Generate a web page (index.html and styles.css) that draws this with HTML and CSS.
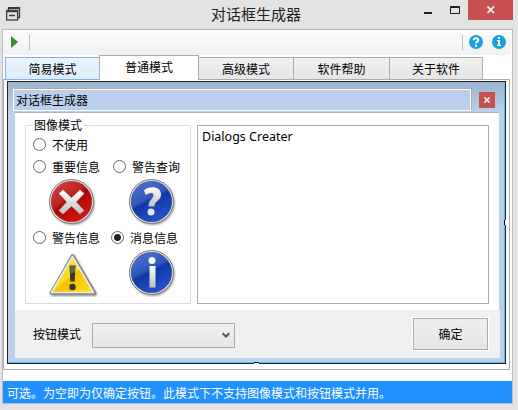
FILE: index.html
```html
<!DOCTYPE html>
<html lang="zh-CN">
<head>
<meta charset="utf-8">
<title>对话框生成器</title>
<link rel="stylesheet" href="styles.css">
</head>
<body>
<div class="window">
  <header class="titlebar">
    <svg class="app-icon" width="16" height="16" viewBox="0 0 16 16" fill="none" stroke="#3c3c3c" stroke-width="1.300"><path d="M2.500 3V.6h11v9.900h-2M2.500 1.500h11" /><rect x=".6" y="3.500" width="11" height="9.500"/><path d="M1 4.500h10.500M3 8.500h6"/></svg>
    <h1 class="title">对话框生成器</h1>
    <svg class="controls" width="46" height="20" viewBox="0 0 46 20"><path d="M2 12h8v2H2z" fill="#222"/><path d="M28 6h10v8H28zm1 2v5h8V8z" fill="#222" fill-rule="evenodd"/></svg>
    <div class="close"><svg width="10" height="8" viewBox="0 0 10 8"><path d="M1.500 .5l6.500 6.500M8 .5L1.500 7" stroke="#fff" stroke-width="1.700"/></svg></div>
  </header>
  <main class="client">
    <div class="toolbar">
      <svg width="7" height="12" viewBox="0 0 7 12"><path d="M0 0l7 6-7 6z" fill="#388a34"/></svg>
      <i class="sep"></i>
      <i class="sep sep-right"></i>
      <svg class="tool" width="14" height="14" viewBox="0 0 14 14"><circle cx="7" cy="7" r="7" fill="#1ba1e2"/><path d="M4.600 5.200C4.600 2.600 9.300 2.600 9.300 5.200 9.300 6.700 7 6.600 7 8.500" fill="none" stroke="#fff" stroke-width="1.900"/><path d="M6 9.700h2v2H6z" fill="#fff"/></svg>
      <svg class="tool" width="14" height="14" viewBox="0 0 14 14"><circle cx="7" cy="7" r="7" fill="#1ba1e2"/><path d="M6 2h2v2H6zM5 5h3v5h1v1H5v-1h1V6H5z" fill="#fff"/></svg>
    </div>
    <nav class="tabs">
      <div class="tab tab-hot">简易模式</div>
      <div class="tab tab-active">普通模式</div>
      <div class="tab tab-near">高级模式</div>
      <div class="tab">软件帮助</div>
      <div class="tab tab-last">关于软件</div>
    </nav>
    <div class="page">
      <section class="dialog">
        <div class="dialog-head">
          <div class="dialog-title">对话框生成器</div>
          <div class="dialog-close"><svg width="6" height="6" viewBox="0 0 6 6"><path d="M.5.5l5 5M5.500.5l-5 5" stroke="#fff" stroke-width="1.500"/></svg></div>
        </div>
        <div class="dialog-body">
          <div class="content">
            <fieldset class="group">
              <legend>图像模式</legend>
              <div class="row"><label class="option"><i class="radio"></i>不使用</label></div>
              <div class="row row-second"><label class="option"><i class="radio"></i>重要信息</label><label class="option"><i class="radio"></i>警告查询</label></div>
              <div class="icons">
                <svg width="48" height="48" viewBox="0 0 48 48">
                  <defs>
                    <linearGradient id="red" x1="0" y1="0" x2=".7" y2="1"><stop offset="0" stop-color="#d84740"/><stop offset=".45" stop-color="#bd2420"/><stop offset=".55" stop-color="#a90505"/><stop offset="1" stop-color="#dc1510"/></linearGradient>
                    <linearGradient id="blue" x1="0" y1="0" x2=".5" y2="1"><stop offset="0" stop-color="#5575d1"/><stop offset=".5" stop-color="#3157bc"/><stop offset=".58" stop-color="#1038a3"/><stop offset="1" stop-color="#244fc9"/></linearGradient>
                    <linearGradient id="silver" x1="0" y1="0" x2="0" y2="1"><stop offset="0" stop-color="#fff"/><stop offset="1" stop-color="#bfbfbf"/></linearGradient>
                    <linearGradient id="yellow" x1="0" y1="0" x2="1" y2="1"><stop offset="0" stop-color="#ffe958"/><stop offset=".5" stop-color="#f5dc16"/><stop offset=".52" stop-color="#f6be00"/><stop offset="1" stop-color="#ffe321"/></linearGradient>
                    <filter id="soft" x="-20%" y="-20%" width="140%" height="140%"><feGaussianBlur stdDeviation=".8"/></filter>
                  </defs>
                  <circle cx="24.500" cy="24.800" r="22" fill="#888" filter="url(#soft)"/><circle cx="23.500" cy="23.500" r="22" fill="#f3f3f3" stroke="#777"/><circle cx="23.500" cy="23.500" r="20.300" fill="url(#red)" stroke="#8e2222" stroke-width=".6"/>
                  <path d="M15 11.500l8.500 8 8.500-8 4.500 4-8 8.500 8 8.500-4.500 4-8.500-8-8.500 8-4.500-4 8-8.500-8-8.500z" fill="url(#silver)" stroke="#8b2020" stroke-width=".5"/>
                </svg>
                <svg width="48" height="48" viewBox="0 0 48 48"><circle cx="24.500" cy="24.800" r="22" fill="#888" filter="url(#soft)"/><circle cx="23.500" cy="23.500" r="22" fill="#f3f3f3" stroke="#777"/><circle cx="23.500" cy="23.500" r="20.300" fill="url(#blue)" stroke="#203a83" stroke-width=".6"/><path d="M16 12.500c5-5 17-4.500 17 4 0 6.500-6.500 6-6.500 12h-6c0-7 5-7.500 5-11.500 0-3-4-2.500-8 0z" fill="url(#silver)"/><circle cx="23" cy="34" r="3.500" fill="#e5e5e5"/></svg>
              </div>
              <div class="row row-third"><label class="option"><i class="radio"></i>警告信息</label><label class="option"><i class="radio checked"></i>消息信息</label></div>
              <div class="icons">
                <svg width="50" height="48" viewBox="0 0 50 48"><path d="M26 7l22 39H4z" fill="#888" stroke="#888" stroke-width="2" stroke-linejoin="round" filter="url(#soft)"/><path d="M24.500 6.500L3 44h44z" fill="#ddd" stroke="#858585" stroke-width="3" stroke-linejoin="round"/><path d="M24.500 7.500L3.500 43.500h42z" fill="url(#yellow)" stroke="#eee" stroke-width="1.500" stroke-linejoin="round"/><path d="M21.500 16.500h6l-.8 16h-4.400z" fill="#35352b"/><path d="M22 17h5v6l-4.500 2z" fill="#666355"/><circle cx="24.500" cy="38" r="3.200" fill="#35352b"/></svg>
                <svg width="48" height="48" viewBox="0 0 48 48"><circle cx="24.500" cy="24.800" r="22" fill="#888" filter="url(#soft)"/><circle cx="23.500" cy="23.500" r="22" fill="#f3f3f3" stroke="#777"/><circle cx="23.500" cy="23.500" r="20.300" fill="url(#blue)" stroke="#203a83" stroke-width=".6"/><circle cx="24" cy="11.500" r="3.500" fill="#fff"/><path d="M21.500 17h6v21.500h-6z" fill="url(#silver)"/></svg>
              </div>
            </fieldset>
            <div class="message">Dialogs Creater</div>
          </div>
          <footer class="footer">
            <span class="footer-label">按钮模式</span>
            <div class="select"><svg width="8" height="7" viewBox="0 0 8 7"><path d="M.7 1.200L4 4.600l3.300-3.400" fill="none" stroke="#555" stroke-width="2"/></svg></div>
            <div class="button">确定</div>
          </footer>
        </div>
        <i class="handle handle-right"></i>
        <i class="handle handle-bottom"></i>
      </section>
    </div>
    <div class="status">可选。为空即为仅确定按钮。此模式下不支持图像模式和按钮模式并用。</div>
  </main>
</div>
</body>
</html>
```
FILE: styles.css
```css
* { box-sizing: border-box; }
body { margin: 0; font: 12px/16px "Noto Sans CJK SC", sans-serif; color: #000; }
svg { display: block; flex: none; }
.window { width: 518px; height: 410px; background: #e3e3e3; overflow: hidden; }
.titlebar { height: 29px; display: flex; align-items: flex-start; }
.app-icon { margin: 7px 0 0 6px; }
.title { flex: 1; margin: 4px 0 0 189px; font-size: 15px; line-height: 20px; font-weight: 400; color: #222; }
.controls { margin-right: 0; }
.close { width: 45px; height: 20px; margin-right: 5px; background: #c75050; display: flex; align-items: center; justify-content: center; }
.client { width: 511px; height: 375px; margin-left: 2px; border: 1px solid #bbb; background: #fff; display: flex; flex-direction: column; }
.toolbar { height: 25px; width: 508px; background: linear-gradient(#fdfdfd, #f0f0f0); border-radius: 0 0 4px 4px; display: flex; align-items: center; padding: 0 5px 1px 8px; flex: none; }
.sep { width: 1px; height: 15px; background: #bbb; margin-left: 11px; }
.sep-right { margin-left: auto; margin-right: -3px; }
.tool { margin-left: 9px; }
.tabs { height: 24px; padding-left: 2px; display: flex; align-items: flex-start; flex: none; }
.tab { position: relative; z-index: 1; width: 96px; height: 23px; margin-top: 2px; border: 1px solid #acacac; border-left: 0; background: linear-gradient(#f0f0f0, #e5e5e5); text-align: center; line-height: 22px; }
.tab-hot { width: 94px; border: 1px solid #7eb4ea; border-right: 0; background: linear-gradient(#ecf4fc, #dcecfc); }
.tab-active { width: 100px; height: 25px; margin-top: 0; border: 1px solid #acacac; border-bottom: 0; background: #fff; line-height: 22px; }
.tab-near { width: 95px; }
.tab-last { width: 93px; }
.page { height: 291px; width: 507px; border: 1px solid #acacac; padding: 1px 0 0 3px; flex: none; }
.dialog { position: relative; width: 499px; height: 283px; border: 1px solid #222; box-shadow: inset -1px -1px #45c8f4; background: linear-gradient(#99b4d1, #b9d1ea 30px); padding: 6px 6px 4px 5px; }
.dialog-head { display: flex; height: 24px; }
.dialog-title { width: 459px; height: 23px; border: 1px solid #fff; border-top-color: #aaa; border-right-color: #aaa; box-shadow: inset -1px 1px #fff; background: #b9cfeb; padding-left: 2px; line-height: 21px; }
.dialog-close { width: 16px; height: 16px; margin: 4px 0 0 7px; background: #c75050; display: flex; align-items: center; justify-content: center; }
.dialog-body { width: 485px; margin-left: 2px; }
.content { width: 484px; height: 198px; background: #fff; border-top: 1px solid #aeb2c0; display: flex; padding-left: 10px; }
.group { width: 166px; height: 186px; margin: 5px 6px 0 0; padding: 0 7px; border: 1px solid #dcdcdc; flex: none; }
legend { height: 15px; margin-left: 0; padding: 0 2px 0 1px; line-height: 14px; white-space: nowrap; }
.row { display: flex; height: 15px; margin-top: 4px; }
.row-second { margin-top: 7px; gap: 13px; }
.row-third { margin-top: 4px; gap: 11px; }
.option { display: flex; align-items: center; line-height: 15px; white-space: nowrap; }
.radio { width: 13px; height: 13px; border: 1px solid #666; border-radius: 50%; margin-right: 6px; }
.checked { background: radial-gradient(circle, #222 3px, #fff 4px); }
.icons { display: flex; justify-content: space-between; width: 128px; height: 48px; margin: 4px 0 0 15px; }
.message { width: 292px; height: 179px; margin-top: 12px; border: 1px solid #acacac; padding: 2px 4px; font: 12.500px/17px "Noto Sans", sans-serif; }
.footer { width: 485px; height: 48px; background: #f0f0f0; display: flex; align-items: center; padding: 0 12px 0 18px; }
.footer-label { width: 59px; }
.select { width: 143px; height: 25px; margin-top: 3px; border: 1px solid #acacac; background: linear-gradient(#f0f0f0, #e5e5e5); display: flex; align-items: center; justify-content: flex-end; padding-right: 4px; }
.button { width: 75px; height: 32px; margin-left: auto; border: 1px solid #acacac; box-shadow: 0 0 0 1px #fff; background: linear-gradient(#f0f0f0, #e5e5e5); text-align: center; line-height: 29px; }
.handle { position: absolute; background: #fff; }
.handle-right { width: 3px; height: 5px; right: -2px; top: 138px; border-left: 1px solid #000; }
.handle-bottom { width: 5px; height: 3px; left: 246px; bottom: -2px; border-top: 1px solid #000; }
.status { height: 22px; margin-top: 11px; padding-left: 4px; background: #1e90ff; color: #fff; line-height: 23px; white-space: nowrap; flex: none; }
```
